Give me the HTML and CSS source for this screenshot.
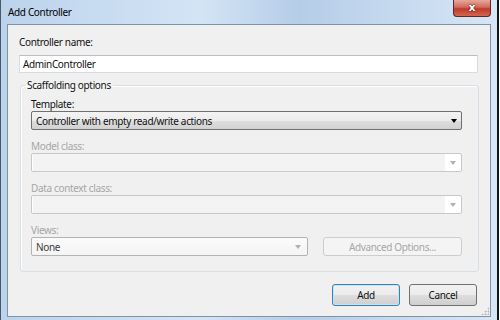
FILE: index.html
```html
<!DOCTYPE html>
<html lang="en">
<head>
    <meta charset="UTF-8">
    <title>Add Controller</title>
    <link rel="stylesheet" href="styles.css">
</head>
<body>
    <div class="window">
        <div class="titlebar">
            <span class="title">Add Controller</span>
            <button class="close">x</button>
        </div>
        <div class="panel">
            <label class="label">Controller name:</label>
            <input type="text" class="textbox" value="AdminController">

            <fieldset class="group">
                <legend>Scaffolding options</legend>

                <div class="label">Template:</div>
                <div class="combo active">
                    <span class="combo-text">Controller with empty read/write actions</span>
                    <span class="arrow"></span>
                </div>

                <div class="label disabled gap">Model class:</div>
                <div class="combo editable">
                    <span class="field"></span>
                    <span class="drop"><span class="arrow"></span></span>
                </div>

                <div class="label disabled gap">Data context class:</div>
                <div class="combo editable">
                    <span class="field"></span>
                    <span class="drop"><span class="arrow"></span></span>
                </div>

                <div class="label disabled gap">Views:</div>
                <div class="views-row">
                    <div class="combo plain">
                        <span class="combo-text">None</span>
                        <span class="arrow"></span>
                    </div>
                    <button class="btn btn-disabled">Advanced Options...</button>
                </div>
            </fieldset>

            <div class="actions">
                <button class="btn btn-default">Add</button>
                <button class="btn">Cancel</button>
            </div>
            <span class="grip"></span>
        </div>
    </div>
</body>
</html>
```

FILE: styles.css
```css
* {
    box-sizing: border-box;
}
body {
    margin: 0;
    background: #ffffff;
    font-family: 'Noto Sans', 'Open Sans', sans-serif;
    font-size: 10px;
    letter-spacing: -0.35px;
    color: #111;
}
.window {
    width: 499px;
    height: 320px;
    display: flex;
    flex-direction: column;
    padding: 0 6px 3px 6px;
    border-left: 1px solid #4b5866;
    border-right: 2px solid #141414;
    background: linear-gradient(to right, #bcd3ec, #d3e4f5 40%, #b6cde8 60%, #d6e6f6);
}
.titlebar {
    height: 24px;
    display: flex;
    align-items: flex-start;
    flex-shrink: 0;
}
.title {
    padding-left: 1px;
    line-height: 24px;
    color: #000;
}
.close {
    margin-left: auto;
    width: 38px;
    height: 17px;
    padding: 0;
    border: 1px solid #5c2a26;
    border-top: none;
    border-radius: 0 0 4px 4px;
    background: linear-gradient(#e6a89c, #d26a5c 45%, #c0392b 55%, #d5664f);
    color: #fff;
    font-family: 'DejaVu Sans', sans-serif;
    font-weight: bold;
    font-size: 11px;
    line-height: 14px;
    text-shadow: 0 0 2px #5a1a14, 0 0 1px #5a1a14;
}
.panel {
    flex: 1;
    position: relative;
    display: flex;
    flex-direction: column;
    padding: 10px 12px 0 11px;
    border: 1px solid #7f93a8;
    background: #f0f0f0;
}
.label {
    display: block;
    line-height: 14px;
    color: #111;
}
.label.disabled {
    color: #a6a6a6;
}
.label.gap {
    margin-top: 9px;
}
.textbox {
    margin-top: 6px;
    height: 18px;
    padding: 0 3px;
    border: 1px solid #d6dce3;
    border-top-color: #b8bec6;
    background: #fff;
    font: inherit;
    letter-spacing: inherit;
    color: #111;
    outline: 0;
}
.group {
    margin: 5px -1px 0 1px;
    padding: 5px 16px 15px 10px;
    border: 1px solid #d5dfe5;
    border-radius: 3px;
    box-shadow: inset 1px 1px 0 #fff;
}
.group legend {
    margin-left: -6px;
    padding: 0 2px;
    line-height: 14px;
    color: #111;
}
.combo {
    height: 19px;
    display: flex;
    align-items: center;
    padding: 0 4px;
    border-radius: 2px;
}
.combo-text {
    flex: 1;
    white-space: nowrap;
}
.arrow {
    width: 0;
    height: 0;
    border-left: 3.5px solid transparent;
    border-right: 3.5px solid transparent;
    border-top: 4px solid #000;
}
.combo.active {
    border: 1px solid #707070;
    background: linear-gradient(#f3f3f3, #ececec 50%, #dedede 52%, #d2d2d2);
}
.combo.editable {
    padding: 0;
    border: 1px solid #c8c8c8;
    box-shadow: inset 0 0 0 1px #fff;
    background: #fff;
}
.combo.editable .field {
    flex: 1;
    height: 100%;
    margin: 1px 0 1px 1px;
    background: #f3f3f3;
}
.combo.editable .drop {
    width: 16px;
    display: flex;
    justify-content: center;
}
.combo.editable .arrow,
.combo.plain .arrow {
    border-top-color: #b0b0b0;
}
.combo.plain {
    width: 277px;
    border: 1px solid #b3b3b3;
    background: linear-gradient(#fbfbfb, #f4f4f4);
    color: #3c3c3c;
    padding-right: 6px;
}
.views-row {
    display: flex;
    gap: 15px;
}
.btn {
    height: 22px;
    width: 68px;
    padding: 0;
    border: 1px solid #707070;
    border-radius: 3px;
    background: linear-gradient(#f2f2f2, #ebebeb 48%, #dddddd 52%, #cfcfcf);
    font: inherit;
    letter-spacing: inherit;
    color: #111;
}
.btn-default {
    border-color: #3c7fb1;
    box-shadow: inset 0 0 0 1px #c4e5f6;
}
.btn-disabled {
    flex: 1;
    height: 19px;
    border-color: #cdcdcd;
    background: #f4f4f4;
    color: #a6a6a6;
}
.actions {
    display: flex;
    justify-content: flex-end;
    gap: 9px;
    margin-top: 12px;
    padding-right: 1px;
}
.grip {
    position: absolute;
    right: 1px;
    bottom: 1px;
    width: 8px;
    height: 8px;
    background: radial-gradient(circle, #a9b3bd 0.8px, transparent 1.2px) 0 0 / 3px 3px;
    clip-path: polygon(100% 0, 100% 100%, 0 100%);
}
```
